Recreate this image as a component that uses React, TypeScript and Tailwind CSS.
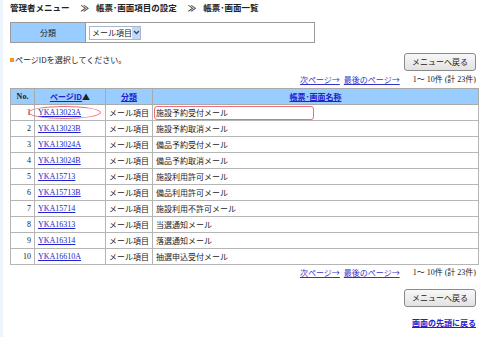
import React from 'react';

interface Row {
  no: number;
  id: string;
  kind: string;
  name: string;
}

const rows: Row[] = [
  { no: 1, id: 'YKA13023A', kind: 'メール項目', name: '施設予約受付メール' },
  { no: 2, id: 'YKA13023B', kind: 'メール項目', name: '施設予約取消メール' },
  { no: 3, id: 'YKA13024A', kind: 'メール項目', name: '備品予約受付メール' },
  { no: 4, id: 'YKA13024B', kind: 'メール項目', name: '備品予約取消メール' },
  { no: 5, id: 'YKA15713', kind: 'メール項目', name: '施設利用許可メール' },
  { no: 6, id: 'YKA15713B', kind: 'メール項目', name: '備品利用許可メール' },
  { no: 7, id: 'YKA15714', kind: 'メール項目', name: '施設利用不許可メール' },
  { no: 8, id: 'YKA16313', kind: 'メール項目', name: '当選通知メール' },
  { no: 9, id: 'YKA16314', kind: 'メール項目', name: '落選通知メール' },
  { no: 10, id: 'YKA16610A', kind: 'メール項目', name: '抽選申込受付メール' },
];

const jp = "font-['Noto_Sans_CJK_JP',sans-serif]";
const serif = "font-['Liberation_Serif','Noto_Sans_CJK_JP',serif]";

function Pager() {
  return (
    <div className="flex justify-end items-center gap-[4px] pr-[3px] h-[13px] text-[8px] leading-[13px] whitespace-nowrap">
      <a className="text-[#3333cc] underline">次ページ→</a>
      <a className="text-[#3333cc] underline">最後のページ→</a>
      <span className={`ml-[9px] text-[#222] text-[8px] ${serif}`}>1～ 10件 (計 23件)</span>
    </div>
  );
}

function BackButton() {
  return (
    <button className="w-[72px] h-[18px] rounded-[3px] border border-[#8a8a8a] bg-gradient-to-b from-[#f8f8f8] to-[#e2e2e2] text-[8px] leading-[16px] text-[#222]">
      メニューへ戻る
    </button>
  );
}

export default function App() {
  return (
    <div className={`w-[500px] h-[337px] bg-white flex overflow-hidden text-[#222] ${jp}`}>
      <div className="w-[3px] bg-[#eef4fb]" />
      <div className="w-[469px] ml-[7px] flex flex-col">
        {/* Breadcrumb */}
        <div className="h-[18px] pt-[1px] flex items-start text-[8.5px] leading-[12px] font-bold text-[#222] whitespace-nowrap">
          <span>管理者メニュー</span>
          <span className="ml-[11px] mr-[7px]">≫</span>
          <span>帳票･画面項目の設定</span>
          <span className="ml-[11px] mr-[7px]">≫</span>
          <span>帳票･画面一覧</span>
        </div>

        {/* Filter */}
        <div className="mt-[4px] w-[305px] h-[21px] border border-[#9a9a9a] flex">
          <div className="w-[75px] bg-[#99ccff] border-r border-[#9a9a9a] flex items-center justify-center text-[8px]">
            分類
          </div>
          <div className="flex items-center pl-[3px]">
            <div className="h-[14px] w-[52px] border border-[#a8b8cc] bg-white flex items-center text-[8px] leading-[12px] whitespace-nowrap">
              <span className="pl-[2px] flex-1">メール項目</span>
              <span className="w-[10px] h-[12px] bg-[#c6d9f4] flex items-center justify-center">
                <svg width="7" height="5" viewBox="0 0 7 5">
                  <path d="M1 1 L3.5 3.5 L6 1" stroke="#2b4b7a" strokeWidth="1.3" fill="none" />
                </svg>
              </span>
            </div>
          </div>
        </div>

        {/* Message + button */}
        <div className="mt-[10px] h-[17px] flex items-center justify-between pr-[3px]">
          <div className="text-[8px] leading-[12px] flex items-center -mt-[3px]">
            <span className="inline-block w-[4px] h-[4px] bg-[#f7941d] mr-[1px]" />
            ページIDを選択してください。
          </div>
          <BackButton />
        </div>

        <div className="mt-[3px]">
          <Pager />
        </div>

        {/* Table */}
        <table className="mt-[2px] w-[469px] border-collapse text-[8px] table-fixed">
          <colgroup>
            <col className="w-[24px]" />
            <col className="w-[71px]" />
            <col className="w-[47px]" />
            <col />
          </colgroup>
          <thead>
            <tr className="h-[16px] bg-[#99ccff]">
              <th className={`border border-[#a9a9a9] font-bold text-[8px] ${serif}`}>No.</th>
              <th className="border border-[#a9a9a9] font-bold">
                <a className="text-[#2222cc] underline">ページID</a>▲
              </th>
              <th className="border border-[#a9a9a9] font-bold">
                <a className="text-[#2222cc] underline">分類</a>
              </th>
              <th className="border border-[#a9a9a9] font-bold">
                <a className="text-[#2222cc] underline">帳票･画面名称</a>
              </th>
            </tr>
          </thead>
          <tbody>
            {rows.map((r) => (
              <tr key={r.no} className="h-[16px]">
                <td className={`border border-[#b5b5b5] text-right pr-[3px] ${serif}`}>{r.no}</td>
                <td className="border border-[#b5b5b5] pl-[3px] relative">
                  <a className={`text-[#2222cc] underline ${serif}`}>{r.id}</a>
                  {r.no === 1 && (
                    <span className="absolute left-[-7px] top-[1px] w-[73px] h-[13px] rounded-[50%] border border-[#e8707a]" />
                  )}
                </td>
                <td className="border border-[#b5b5b5] text-center whitespace-nowrap">{r.kind}</td>
                <td className="border border-[#b5b5b5] pl-[3px] relative">
                  {r.name}
                  {r.no === 1 && (
                    <span className="absolute left-[1px] top-[1px] w-[160px] h-[14px] rounded-[3px] border border-[#e8707a]" />
                  )}
                </td>
              </tr>
            ))}
          </tbody>
        </table>

        <div className="mt-[1px]">
          <Pager />
        </div>

        <div className="mt-[10px] flex justify-end pr-[3px]">
          <BackButton />
        </div>

        <div className="mt-[10px] flex justify-end pr-[3px] text-[8px] leading-[12px] font-bold">
          <a className="text-[#2222cc] underline">画面の先頭に戻る</a>
        </div>
      </div>
    </div>
  );
}
